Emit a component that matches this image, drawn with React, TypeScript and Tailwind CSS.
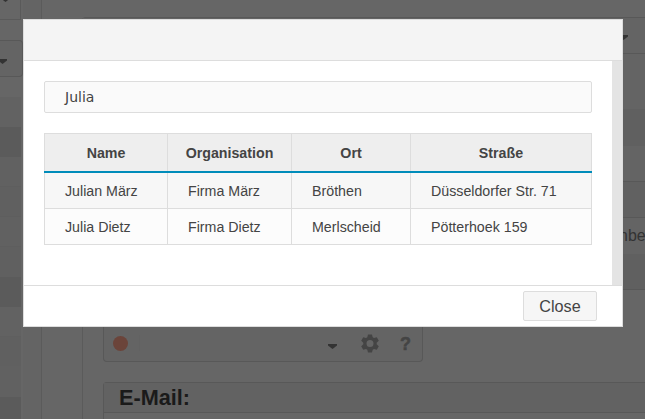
import React from "react";

const rows = [
  ["Julian März", "Firma März", "Bröthen", "Düsseldorfer Str. 71"],
  ["Julia Dietz", "Firma Dietz", "Merlscheid", "Pötterhoek 159"],
];

function Caret({ className = "" }: { className?: string }) {
  return (
    <svg className={className} width="9" height="5" viewBox="0 0 9 5" fill="#333">
      <path d="M0 0h9v1.5L4.5 5 0 1.5z" />
    </svg>
  );
}

function Sidebar() {
  return (
    <div className="w-[23px] shrink-0 overflow-hidden">
      <div className="h-5 w-[21px] border-r border-b border-[#5a5a5a] pl-[1px]">
        <Caret className="-translate-y-[3px]" />
      </div>
      <div className="mt-5 h-[37px] rounded-r-sm border-y border-r border-[#585858] bg-[#646464] pt-[18px]">
        <Caret className="-ml-[2px]" />
      </div>
      <div className="mt-5 w-[21px]">
        <div className="h-[30px] bg-[#626262]" />
        <div className="h-[30px] bg-[#5b5b5b]" />
        <div className="h-[30px] border-b border-[#5e5e5e] bg-[#616161]" />
        <div className="h-[30px] border-b border-[#5e5e5e] bg-[#606060]" />
        <div className="h-[30px] border-b border-[#5e5e5e] bg-[#616161]" />
        <div className="h-[30px] bg-[#606060]" />
        <div className="h-[30px] bg-[#5b5b5b]" />
        <div className="h-[30px] border-b border-[#5f5f5f] bg-[#626262]" />
        <div className="h-[30px] border-b border-[#616161] bg-[#606060]" />
        <div className="h-[30px] bg-[#616161]" />
        <div className="h-[30px] bg-[#5b5b5b]" />
      </div>
    </div>
  );
}

function Backdrop() {
  return (
    <div className="flex h-[419px] w-[645px] overflow-hidden bg-[#666]">
      <Sidebar />
      <div className="w-[19px] shrink-0 border-r border-[#5b5b5b] bg-[#646464]" />
      <div className="flex min-w-0 grow flex-col pl-10">
        <div className="mt-[17px] flex h-[273px] flex-col items-stretch rounded-tl-sm border-t border-l border-[#585858]">
          <div className="flex h-9 items-center justify-end border-b border-[#585858] bg-[#646464] pr-[17px]">
            <Caret className="mt-1" />
          </div>
          <div className="h-[55px] bg-[#646464]" />
          <div className="h-[37px] bg-[#606060]" />
          <div className="h-9 border-b border-[#585858] bg-[#646464]" />
          <div className="h-9 border-b border-[#585858] bg-[#616161]" />
          <div className="flex h-9 items-center justify-end overflow-hidden bg-[#646464] text-base text-[#333]">
            <span className="-mr-[6px] whitespace-nowrap">Number</span>
          </div>
          <div className="grow border-b border-[#585858] bg-[#606060]" />
        </div>
        <div className="flex grow flex-col border-l border-[#5b5b5b] pl-5">
          <div className="flex h-[72px] w-[320px] items-end rounded-b-sm border-x border-b border-[#585858] bg-[#646464]">
            <div className="flex h-9 w-full items-center">
              <span className="ml-[9px] h-[15px] w-[15px] rounded-full bg-[#6b443a]" />
              <span className="ml-[11px] h-4 w-px bg-[#626262]" />
              <Caret className="mt-[6px] ml-[188px]" />
              <svg className="ml-6" width="18" height="19" viewBox="0 0 18 19" fill="#444">
                <path
                  fillRule="evenodd"
                  d="M7 .5h4l.7 2.8 1.3.8 2.8-.8 2 3.4-2.1 2v1.6l2.1 2-2 3.4-2.8-.8-1.3.8-.7 2.8H7l-.7-2.8-1.3-.8-2.8.8-2-3.4 2.1-2V8.700l-2.1-2 2-3.400 2.800.8 1.300-.8zM9 6a3.500 3.500 0 100 7 3.500 3.500 0 000-7z"
                />
              </svg>
              <span className="mt-[2px] ml-[21px] text-[18px] leading-none font-bold text-[#444] [-webkit-text-stroke:0.5px_#444]">
                ?
              </span>
            </div>
          </div>
          <div className="mt-5 grow rounded-tl border-t border-l border-[#585858]">
            <h2 className="h-[30px] border-b border-[#585858] bg-[#626262] pl-[15px] text-[21.7px] leading-[30px] font-bold text-[#1a1a1a]">
              E-Mail:
            </h2>
          </div>
        </div>
      </div>
    </div>
  );
}

function Dialog() {
  return (
    <div
      role="dialog"
      className="absolute top-[19px] left-[23px] flex h-[308px] w-[600px] flex-col border border-[#ddd] bg-white text-[#444]"
    >
      <div className="h-[41px] shrink-0 border-b border-[#ddd] bg-[#f4f4f4]" />
      <div className="flex min-h-0 grow">
        <div className="w-[588px] shrink-0 px-5 pt-5">
          <div className="flex h-8 w-[548px] items-center rounded-[2px] border border-[#ddd] bg-[#fafafa] pl-5 font-['DejaVu_Sans',sans-serif] text-[14px]">
            Julia
          </div>
          <table className="mt-5 w-[548px] table-fixed border-separate border-spacing-0 border-t border-[#ddd] text-[14.22px] leading-5">
            <colgroup>
              <col className="w-[124px]" />
              <col className="w-[124px]" />
              <col className="w-[119px]" />
              <col className="w-[181px]" />
            </colgroup>
            <thead>
              <tr className="h-[37px] bg-[#eee]">
                {["Name", "Organisation", "Ort", "Straße"].map((h) => (
                  <th key={h} className="border-r border-[#ddd] p-0 pt-px text-center font-bold first:border-l">
                    {h}
                  </th>
                ))}
              </tr>
              <tr className="h-[2px]">
                <td colSpan={4} className="h-[2px] bg-[#008cba] p-0" />
              </tr>
            </thead>
            <tbody>
              {rows.map((r) => (
                <tr key={r[0]} className="h-9 odd:bg-[#f7f7f7] even:bg-[#fcfcfc]">
                  {r.map((c) => (
                    <td key={c} className="border-r border-b border-[#ddd] py-0 pr-0 pl-5 whitespace-nowrap first:border-l">
                      {c}
                    </td>
                  ))}
                </tr>
              ))}
            </tbody>
          </table>
        </div>
        <div className="grow bg-[#e4e4e4]" />
      </div>
      <div className="flex h-[41px] shrink-0 items-center justify-end border-t border-[#ddd] pr-[25px]">
        <button className="h-[30px] w-[74px] rounded-[2px] border border-[#ddd] bg-[#f6f6f6] pt-px text-[16.2px] leading-none">
          Close
        </button>
      </div>
    </div>
  );
}

export default function App() {
  return (
    <div className="relative h-[419px] w-[645px] overflow-hidden font-['Liberation_Sans',Arial,sans-serif]">
      <Backdrop />
      <Dialog />
    </div>
  );
}
